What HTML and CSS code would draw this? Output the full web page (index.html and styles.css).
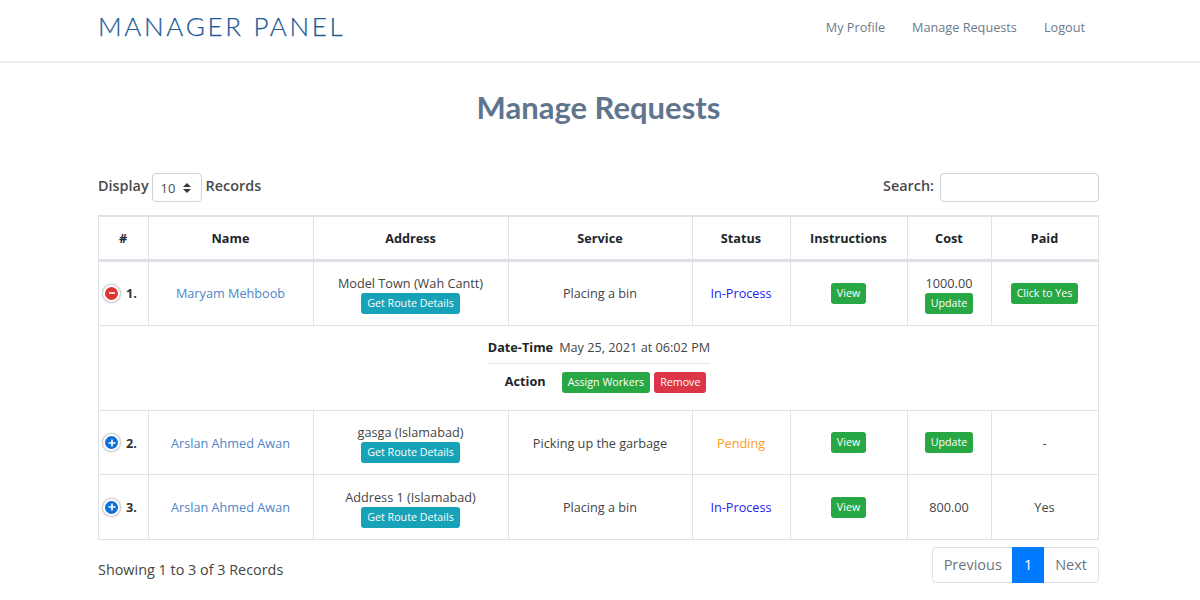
FILE: index.html
```html
<!DOCTYPE html>
<html lang="en">
<head>
<meta charset="utf-8">
<title>Manage Requests</title>
<link rel="stylesheet" href="styles.css">
</head>
<body>
<header class="topbar">
  <div class="wrap topbar-inner">
    <a class="brand">MANAGER PANEL</a>
    <nav class="nav">
      <a>My Profile</a>
      <a>Manage Requests</a>
      <a>Logout</a>
    </nav>
  </div>
</header>
<main class="wrap">
  <h1 class="title">Manage Requests</h1>
  <div class="controls">
    <div class="length">
      <span class="label">Display</span>
      <span class="select">10
        <svg class="sort" width="8" height="10" viewBox="0 0 8 10"><path d="M4 0 8 4H0zM0 6h8l-4 4z" fill="#343a40"/></svg>
      </span>
      <span class="label">Records</span>
    </div>
    <div class="search">
      <span class="label">Search:</span>
      <span class="input"></span>
    </div>
  </div>
  <table class="grid">
    <colgroup>
      <col class="c1"><col class="c2"><col class="c3"><col class="c4"><col class="c5"><col class="c6"><col class="c7"><col class="c8">
    </colgroup>
    <thead>
      <tr><th>#</th><th>Name</th><th>Address</th><th>Service</th><th>Status</th><th>Instructions</th><th>Cost</th><th>Paid</th></tr>
    </thead>
    <tbody>
      <tr class="row first">
        <td><div class="idx"><span class="toggle minus"><svg width="8" height="8" viewBox="0 0 8 8"><path d="M1 4h6" stroke="#fff" stroke-width="1.6"/></svg></span><b>1.</b></div></td>
        <td><a class="link">Maryam Mehboob</a></td>
        <td>Model Town (Wah Cantt)<br><a class="btn info">Get Route Details</a></td>
        <td>Placing a bin</td>
        <td><span class="process">In-Process</span></td>
        <td><a class="btn ok">View</a></td>
        <td>1000.00<br><a class="btn ok">Update</a></td>
        <td><a class="btn ok">Click to Yes</a></td>
      </tr>
      <tr class="child">
        <td colspan="8">
          <div class="detail">
            <div class="detail-line"><b>Date-Time</b><span>May 25, 2021 at 06:02 PM</span></div>
            <div class="detail-line action"><b class="action-label">Action</b><span class="btns"><a class="btn ok">Assign Workers</a><a class="btn danger">Remove</a></span></div>
          </div>
        </td>
      </tr>
      <tr class="row">
        <td><div class="idx"><span class="toggle plus"><svg width="8" height="8" viewBox="0 0 8 8"><path d="M.5 4h7M4 .5v7" stroke="#fff" stroke-width="1.6"/></svg></span><b>2.</b></div></td>
        <td><a class="link">Arslan Ahmed Awan</a></td>
        <td>gasga (Islamabad)<br><a class="btn info">Get Route Details</a></td>
        <td>Picking up the garbage</td>
        <td><span class="pending">Pending</span></td>
        <td><a class="btn ok">View</a></td>
        <td><a class="btn ok">Update</a></td>
        <td>-</td>
      </tr>
      <tr class="row last">
        <td><div class="idx"><span class="toggle plus"><svg width="8" height="8" viewBox="0 0 8 8"><path d="M.5 4h7M4 .5v7" stroke="#fff" stroke-width="1.6"/></svg></span><b>3.</b></div></td>
        <td><a class="link">Arslan Ahmed Awan</a></td>
        <td>Address 1 (Islamabad)<br><a class="btn info">Get Route Details</a></td>
        <td>Placing a bin</td>
        <td><span class="process">In-Process</span></td>
        <td><a class="btn ok">View</a></td>
        <td>800.00</td>
        <td>Yes</td>
      </tr>
    </tbody>
  </table>
  <div class="foot">
    <div class="info-text">Showing 1 to 3 of 3 Records</div>
    <div class="pager"><a>Previous</a><a class="on">1</a><a>Next</a></div>
  </div>
</main>
</body>
</html>
```
FILE: styles.css
```css
* { box-sizing: border-box; }
html, body { margin: 0; padding: 0; }
body {
  width: 1200px;
  height: 600px;
  overflow: hidden;
  background: #fff;
  color: #444;
  font-family: "Open Sans", sans-serif;
  font-size: 12.7px;
  line-height: 20px;
}
.wrap { width: 1001px; margin-left: 98px; }
.topbar { height: 63px; border-bottom: 2px solid #eeeeee; }
.topbar-inner { display: flex; justify-content: space-between; height: 61px; }
.brand {
  font-family: Lato, sans-serif;
  font-weight: 300;
  font-size: 26px;
  letter-spacing: 2.68px;
  -webkit-text-stroke: 0.25px #1f5a96;
  color: #1f5a96;
  line-height: 53px;
}
.nav { display: flex; gap: 27px; padding-right: 14px; padding-top: 17px; color: #6c7a8c; }
.title {
  margin: 25px 0 0;
  text-align: center;
  font-family: Lato, sans-serif;
  font-weight: 700;
  font-size: 31px;
  line-height: 38px;
  color: #5f748d;
}
.controls { display: flex; justify-content: space-between; align-items: center; margin-top: 47px; height: 29px; font-size: 14.4px; font-weight: 600; color: #4a4a4a; }
.length, .search { display: flex; align-items: center; }
.search { gap: 6px; }
.label { padding-bottom: 3px; }
.select {
  display: flex; align-items: center; justify-content: space-between;
  width: 50px; height: 29px; margin: 0 4px 0 3px; padding: 0 10px 0 8px;
  border: 1px solid #ced4da; border-radius: 4px;
  font-size: 13px; font-weight: 400; color: #495057;
}
.sort { margin-top: 1px; }
.input { display: block; width: 159px; height: 29px; border: 1px solid #ced4da; border-radius: 4px; }
.grid { width: 1000px; margin-top: 13px; table-layout: fixed; border-collapse: collapse; border: 1px solid #dee2e6; }
.c1 { width: 50px; } .c2 { width: 165px; } .c3 { width: 195px; } .c4 { width: 184px; }
.c5 { width: 98px; } .c6 { width: 117px; } .c7 { width: 84px; } .c8 { width: 107px; }
th, td { border: 1px solid #dee2e6; padding: 0 1px 0 0; text-align: center; vertical-align: middle; }
thead th { height: 44px; border-top: 2px solid #dee2e6; border-bottom: 3px solid #dee2e6; color: #212529; font-weight: 700; font-size: 12.7px; }
.row td { height: 64px; color: #444; }
.first td { height: 65.5px; }
.last td { height: 65px; }
.child td { height: 85px; vertical-align: top; padding-top: 11px; }
.idx { display: flex; align-items: center; justify-content: flex-start; gap: 6px; padding-left: 4px; }
.idx b { color: #333; font-weight: 700; }
.toggle {
  display: flex; align-items: center; justify-content: center;
  width: 17px; height: 17px; border-radius: 50%;
  border: 2px solid #fff; box-shadow: 0 0 2px 1px #bdbdbd;
  flex: none;
}
.minus { background: #dc3535; }
.plus { background: #0d6fd8; }
.link { color: #4f86c6; }
.process { color: #2424f5; }
.pending { color: #ff9a1f; }
.btn {
  display: inline-block; padding: 0 5px; height: 21px; line-height: 19px;
  border: 1px solid transparent; border-radius: 3px;
  font-size: 10.7px; color: #fff; vertical-align: top;
}
.info { background: #17a2b8; }
.ok { background: #28a745; }
.danger { background: #dc3545; }
.detail { display: inline-block; margin-left: 2px; }
.detail-line { display: flex; align-items: center; gap: 6px; height: 20px; }
.detail-line:first-child { box-sizing: content-box; border-bottom: 1px solid #e6e6e6; padding-bottom: 6px; }
.detail-line b { color: #212529; font-weight: 700; }
.action { gap: 16px; height: 21px; margin-top: 8px; padding-left: 17px; }
.action-label { padding-bottom: 3px; }
.btns { display: flex; gap: 4px; }
.foot { display: flex; justify-content: space-between; align-items: flex-start; margin-top: 7px; }
.info-text { font-size: 14.4px; padding-top: 13px; line-height: 20px; }
.pager { display: flex; height: 36px; border: 1px solid #dee2e6; border-radius: 4px; font-size: 14.5px; color: #6c757d; }
.pager a { padding: 0 11px; line-height: 33px; }
.pager a:first-child { padding-right: 10px; }
.pager .on { background: #007bff; color: #fff; height: 36px; margin-top: -1px; padding: 0 12px; line-height: 35px; }
```
